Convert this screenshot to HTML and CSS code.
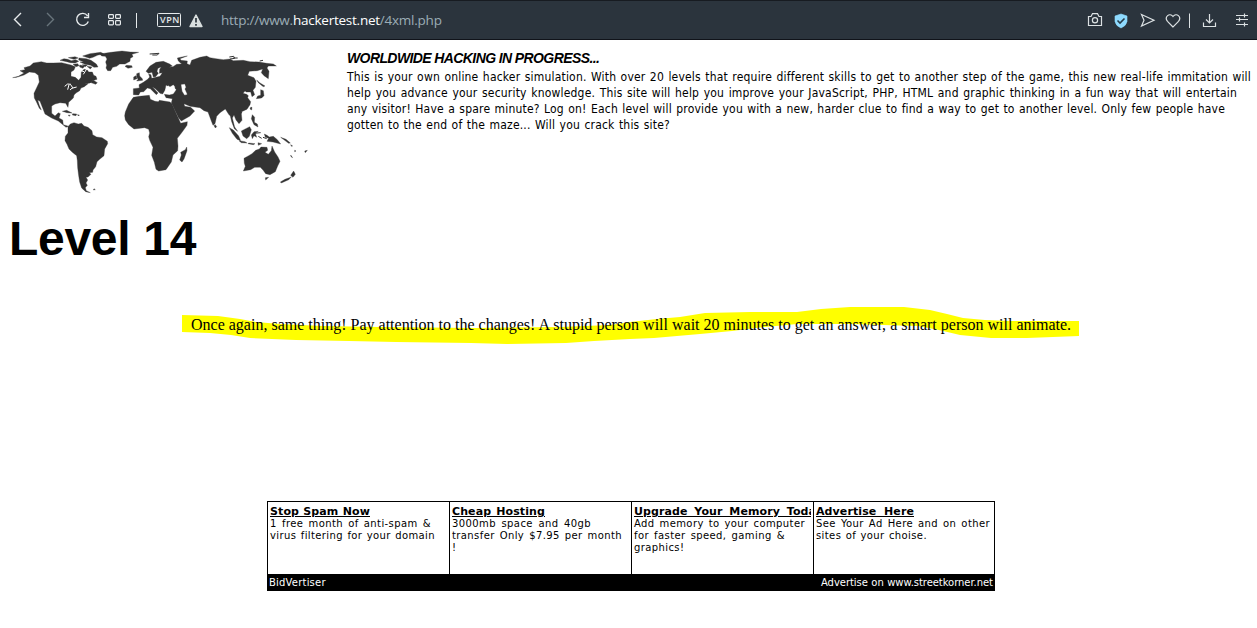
FILE: index.html
```html
<!DOCTYPE html>
<html lang="en">
<head>
<meta charset="utf-8">
<title>Level 14</title>
<link rel="stylesheet" href="styles.css">
</head>
<body>
<header class="toolbar">
  <svg class="nav-icons" width="215" height="36" viewBox="0 0 215 36" fill="none" stroke="#e6eaec" stroke-width="1.4">
    <path d="M21 11L14.500 17.500L21 24"/>
    <path d="M47 11L53.500 17.500L47 24" stroke="#68747b"/>
    <path d="M87.500 13.800A6 6 0 1 0 88.300 19.500M88.500 11V15.500H84"/>
    <g stroke-width="1.200"><rect x="108.600" y="12.600" width="4.800" height="3.800" rx=".8"/><rect x="115.600" y="12.600" width="4.800" height="3.800" rx=".8"/><rect x="108.600" y="18.600" width="4.800" height="4.300" rx=".8"/><rect x="115.600" y="18.600" width="4.800" height="4.300" rx=".8"/></g>
    <path d="M136.500 11V26" stroke-width="1"/>
    <rect x="157.500" y="11.500" width="23" height="13" rx="1" stroke-width="1"/>
    <text class="vpn" x="160" y="21">VPN</text>
    <path d="M196 13L202 24.500H190Z" fill="#d9dfdf" stroke="#d9dfdf" stroke-linejoin="round"/>
    <path d="M196 16V20.500M196 22V23.700" stroke="#2b343c" stroke-width="1.700"/>
  </svg>
  <div class="address">http://www.<b>hackertest.net</b>/4xml.php</div>
  <svg class="tool-icons" width="177" height="36" viewBox="1080 0 177 36" fill="none" stroke="#dce1e3" stroke-width="1.200">
    <path d="M1088.500 14.500H1091L1092.500 11.700H1097.500L1099 14.500H1101.500V23.500H1088.500Z"/><circle cx="1095" cy="18.300" r="2.600"/>
    <path d="M1121 12L1127 14V19.500Q1126 24 1121 26Q1116 24 1115 19.500V14Z" fill="#8edafe" stroke="#8edafe" stroke-width=".6"/>
    <path d="M1117.500 18.500L1120 21L1124.500 16.500" stroke="#263b48" stroke-width="1.600"/>
    <path d="M1141.500 12.500L1154 18.200L1141.500 24L1144 18.200Z"/>
    <path d="M1173 25L1167.500 19.300C1164 15 1169.500 10 1173 14.500C1176.500 10 1182 15 1178.500 19.300Z"/>
    <path d="M1189.500 11.500V26" stroke-width="1"/>
    <path d="M1209.500 12V21M1206 17.500L1209.500 21L1213 17.500M1203.500 20.500V24.500H1215.500V20.500"/>
    <path d="M1236 13.500H1248M1236 17.500H1248M1236 22.500H1248M1244.500 11.500V15.500M1239.500 15.500V19.500M1244.500 20.500V24.500"/>
  </svg>
</header>
<main class="page">
  <section class="intro">
    <svg class="map" viewBox="0 0 960 480" fill="#333" stroke="#333" stroke-width="1">
      <path d="M38 101L55 97L72 87L60 80L75 77L72 71L90 66L100 57L124 53L140 57L160 57L185 56L213 63L226 68L222 78L213 84L213 97L226 100L236 109L243 100L244 84L252 76L262 78L266 84L277 84L281 94L288 97L291 106L278 110L270 117L254 120L264 119L253 128L243 132L239 140L228 147L222 153L220 162L206 175L204 190L197 178L180 176L165 180L155 186L155 208L165 216L175 206L181 209L177 222L188 228L190 242L206 247L198 250L186 240L175 231L155 222L135 210L128 192L120 172L113 168L118 184L124 198L118 193L109 173L103 162L102 148L111 129L118 114L115 94L105 86L88 84L72 93L50 100Z"/>
      <path d="M180 49L192 44L203 46L214 50L227 47L236 52L226 57L211 56L200 53ZM205 41L225 38L235 42L222 46ZM237 42L259 44L273 49L289 60L294 69L282 70L272 64L255 61L240 54L251 53L236 48ZM248 36L270 29L302 25L311 29L292 34L279 40L269 43ZM239 63L254 66L249 73L239 69ZM261 67L276 69L271 75ZM219 61L233 59L237 65L228 68ZM247 62L262 63L256 68Z"/>
      <path d="M270 115L280 109L292 116L287 121ZM260 115L265 110L274 112L268 116ZM187 202L200 199L216 207L201 206ZM218 209L230 210L228 215L217 213ZM205 213L211 214L207 217ZM232 212L238 213L236 216Z"/>
      <path d="M299 30L333 25L366 21L391 24L416 25L396 31L399 38L391 43L390 52L375 60L359 60L350 67L338 70L332 80L323 80L318 72L320 64L317 54L321 45L316 37L305 36ZM375 67L380 64L395 65L397 70L384 73Z"/>
      <path d="M204 248L211 240L222 236L235 240L245 238L252 246L264 250L276 260L278 272L290 279L306 281L322 292L323 299L314 315L312 335L299 346L291 353L287 368L279 378L278 385L268 386L273 391L264 399L258 400L263 408L258 417L262 424L256 431L259 440L271 446L257 443L245 432L239 414L236 395L233 371L232 350L230 335L217 325L207 315L201 301L195 290L196 277L204 267ZM282 434L286 437L280 438Z"/>
      <path d="M400 160L418 157L448 154L451 166L465 172L475 173L478 169L510 174L516 180L542 238L562 233L561 244L546 265L532 283L534 306L533 320L519 333L514 354L498 377L476 381L468 376L463 355L455 334L459 310L449 289L446 278L449 267L446 256L434 251L402 255L386 242L376 228L374 215L376 204L386 180ZM560 309L556 317L542 325L544 333L539 348L546 354L552 345L561 320Z"/>
      <path d="M400 152L400 134L418 132L417 122L430 115L443 106L449 99L446 90L453 92L455 103L480 97L487 86L478 88L479 76L484 69L474 73L471 82L475 88L467 98L460 99L456 85L445 88L438 82L450 66L468 55L490 52L509 60L517 66L508 70L519 68L530 61L545 60L535 51L532 42L550 38L562 36L548 41L540 44L543 49L562 51L561 59L570 63L575 49L600 40L620 36L630 41L648 44L670 47L690 45L700 50L730 49L750 53L777 54L800 58L820 60L829 66L805 66L801 72L807 82L805 104L792 95L784 86L788 75L772 80L748 82L743 94L762 101L768 112L766 130L759 139L764 152L756 158L752 144L739 144L735 141L729 148L740 151L745 155L743 161L752 173L750 182L741 196L725 203L724 209L726 229L717 239L708 228L702 213L697 222L704 249L713 262L703 254L695 233L691 216L686 211L676 195L660 206L650 217L645 239L639 244L634 231L624 204L612 200L600 191L570 187L552 179L554 187L572 190L584 201L570 216L544 231L536 222L514 177L517 164L498 161L493 151L508 153L520 150L529 137L520 128L510 131L498 123L495 138L488 150L480 148L466 134L457 128L474 147L469 152L451 134L442 132L431 143L421 144L416 153Z"/>
      <path d="M410 89L418 86L419 96L427 104L428 109L410 111L414 106L410 98ZM401 99L408 95L411 104L401 108ZM646 242L650 248L646 252L642 245ZM688 251L700 258L716 276L722 290L711 286L697 268ZM724 261L749 248L754 257L748 277L740 284L729 276ZM717 290L735 293L741 297L724 296ZM762 263L775 262L766 268L770 280L762 275L757 284L754 273ZM793 270L801 274L808 279L820 277L832 287L842 300L819 294L801 292L806 283L796 280ZM718 201L726 205L722 210ZM752 190L756 190L755 198L750 195ZM757 212L764 220L763 235L772 240L774 249L762 242L754 224ZM790 128L786 125L775 116L770 108L779 116L795 126ZM782 137L790 140L792 155L785 162L769 164L773 156L782 154Z"/>
      <path d="M730 381L736 367L733 358L732 343L746 335L756 329L767 319L778 315L783 309L801 310L803 319L795 325L805 331L814 320L816 306L824 324L834 339L840 352L833 366L826 383L810 392L797 389L789 378L781 370L764 370L752 377ZM796 401L806 400L797 408ZM881 381L886 391L879 400L872 394ZM874 399L866 407L844 417L841 414L855 406ZM842 280L858 286L871 297L866 298L850 286ZM872 302L878 306L874 307ZM884 319L888 321L884 323ZM914 321L922 319L916 326ZM872 333L878 341L873 338ZM746 297L765 299L760 302L744 299ZM774 296L785 299L775 304Z"/>
      <g fill="#fff" stroke="#fff"><path d="M500 130L504 125L510 129L520 123L524 128L524 135L509 135L497 138ZM544 122L554 121L557 130L554 135L561 151L554 153L547 142Z"/></g>
      <path d="M194 127L203 120L213 121M203 137L207 122M212 122L218 131L210 138M215 133L230 129M243 80L252 83M250 91L260 75" fill="none" stroke="#fff" stroke-width="3"/>
      <path d="M449 30L477 28L472 33L457 33M688 39L701 37L704 43L690 45M700 42L713 42M779 51L789 49M762 268L782 266M775 277L785 283M789 280L800 284" fill="none" stroke-width="3"/>
    </svg>
    <div class="about">
      <h2>WORLDWIDE HACKING IN PROGRESS...</h2>
      <p class="about-first">This is your own online hacker simulation. With over 20 levels that require different skills to get to another step of the game, this new real-life immitation will</p>
      <p class="about-second">help you advance your security knowledge. This site will help you improve your JavaScript, PHP, HTML and graphic thinking in a fun way that will entertain</p>
      <p class="about-third">any visitor! Have a spare minute? Log on! Each level will provide you with a new, harder clue to find a way to get to another level. Only few people have</p>
      <p class="about-fourth">gotten to the end of the maze... Will you crack this site?</p>
    </div>
  </section>
  <h1>Level 14</h1>
  <section class="hint">
    <svg class="marker" viewBox="182 305 898 40" preserveAspectRatio="none" fill="#ff0"><path d="M182 315L218 316L240 319L256 322L280 324L323 326L380 327L475 328L560 327L610 325L630 322L657 319L680 317L705 313L750 312L797 312L821 309L850 307H904L930 310L947 314L963 318L985 320L1010 321H1079V336L1027 338H991L960 335L939 330L918 326L883 325L850 324H797L765 327L732 331L700 334L654 338L630 339L594 341L566 343L507 344L471 343L396 342L349 341L296 340L250 338L231 335L210 333L182 332Z"/></svg>
    <p>Once again, same thing! Pay attention to the changes! A stupid person will wait 20 minutes to get an answer, a smart person will animate.</p>
  </section>
  <section class="ads">
    <div class="ad-grid">
      <article><h3 class="w100">Stop Spam Now</h3><p class="w161">1 free month of anti-spam &amp;</p><p class="w165">virus filtering for your domain</p></article>
      <article><h3 class="w93">Cheap Hosting</h3><p class="w139">3000mb space and 40gb</p><p class="w170">transfer Only $7.95 per month</p><p>!</p></article>
      <article><h3 class="clipped"><span class="w189">Upgrade Your Memory Today</span></h3><p class="w171">Add memory to your computer</p><p class="w151">for faster speed, gaming &amp;</p><p>graphics!</p></article>
      <article><h3 class="w98">Advertise Here</h3><p class="w174">See Your Ad Here and on other</p><p class="w111">sites of your choise.</p></article>
    </div>
    <footer><span>BidVertiser</span><span class="w172">Advertise on www.streetkorner.net</span></footer>
  </section>
</main>
</body>
</html>
```
FILE: styles.css
```css
* { box-sizing: border-box; }
body, h1, h2, h3, p { margin: 0; }
body { width: 1257px; height: 628px; overflow: hidden; background: #fff; color: #000; }
.toolbar { display: flex; height: 40px; padding-top: 1px; background: #2b343d; border-top: 1px solid #171b21; border-bottom: 1px solid #10131a; }
.nav-icons, .tool-icons { flex: none; }
.vpn { font: 600 9px "Open Sans", sans-serif; letter-spacing: .6px; fill: #e6eaec; stroke: none; }
.address { flex: 1; padding-left: 6px; font: 13.5px/36px "Open Sans", sans-serif; letter-spacing: -.24px; color: #9bacb5; white-space: nowrap; }
.address b { font-weight: 400; color: #fff; }
.intro { display: flex; height: 168px; padding-top: 4px; }
.map { width: 320px; height: 160px; flex: none; }
.about { padding: 5px 0 0 27px; }
.about h2 { width: 252px; height: 16px; white-space: nowrap; text-align-last: justify; font: italic bold 14px/18px "Liberation Sans", Arial, sans-serif; letter-spacing: -.6px; }
.about p { white-space: nowrap; text-align-last: justify; font: 12px/16px "DejaVu Sans Condensed", "DejaVu Sans", sans-serif; font-stretch: condensed; letter-spacing: .19px; }
.about h2 + p { margin-top: 4px; }
.about-first { width: 904px; }
.about-second { width: 890px; }
.about-third { width: 878px; }
.about-fourth { width: 323px; }
h1 { height: 60px; padding: 1px 0 0 9px; font: bold 48px/60px "Liberation Sans", Arial, sans-serif; letter-spacing: -.3px; }
.hint { display: grid; margin: 37px 177px 0 182px; height: 40px; }
.marker { grid-area: 1 / 1; width: 898px; height: 40px; }
.hint p { grid-area: 1 / 1; z-index: 1; width: 880px; margin-left: 9px; font: 16px/40px "Liberation Serif", "Times New Roman", serif; letter-spacing: -.01px; white-space: nowrap; text-align-last: justify; }
.ads { width: 728px; margin: 156px 0 0 267px; border: 1px solid #000; font: 10px/12px "DejaVu Sans", Verdana, sans-serif; white-space: nowrap; }
.ad-grid { display: grid; grid-template-columns: 181px 182px 182px 181px; height: 72px; }
.ad-grid article { border-left: 1px solid #000; padding: 3px 2px 0; }
.ad-grid article:first-child { border-left: 0; }
.ad-grid h3 { font-size: 11px; line-height: 13px; text-decoration: underline; text-decoration-thickness: 1px; letter-spacing: .1px; }
.clipped { width: 177px; overflow: hidden; }
.clipped span { display: block; text-decoration: underline; text-decoration-thickness: 1px; }
.ads [class^="w"] { text-align-last: justify; }
.ads p { letter-spacing: .4px; }
.ads footer { display: flex; justify-content: space-between; height: 16px; padding: 0 1px; background: #000; color: #fff; line-height: 17px; letter-spacing: .2px; }
.ads footer .w172 { letter-spacing: -.05px; }
.w93 { width: 93px; } .w98 { width: 98px; } .w100 { width: 100px; } .w111 { width: 111px; }
.w139 { width: 139px; } .w151 { width: 151px; } .w161 { width: 161px; } .w165 { width: 165px; }
.w170 { width: 170px; } .w171 { width: 171px; } .w172 { width: 172px; } .w174 { width: 174px; } .w189 { width: 189px; }
```
